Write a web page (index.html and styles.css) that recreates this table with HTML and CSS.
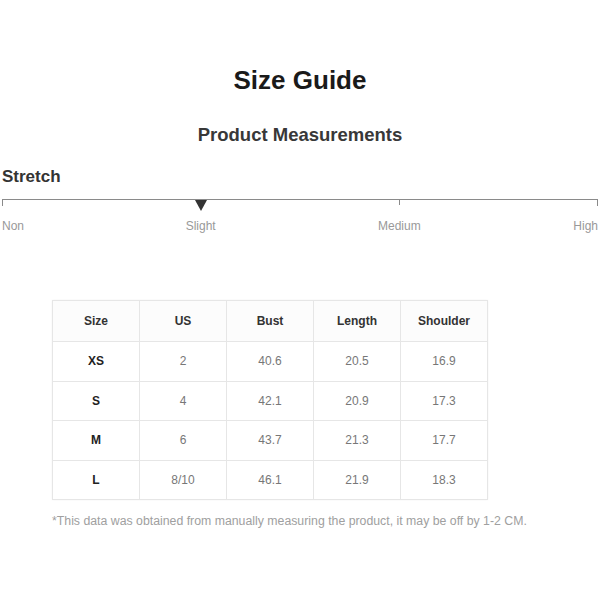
FILE: index.html
```html
<!DOCTYPE html>
<html>
<head>
<meta charset="utf-8">
<link rel="stylesheet" href="styles.css">
</head>
<body>
<div class="page">
  <h1 class="title">Size Guide</h1>
  <h2 class="subtitle">Product Measurements</h2>
  <section class="stretch">
    <div class="stretch-label">Stretch</div>
    <div class="scale">
      <div class="tick t0"></div>
      <div class="tick t1"></div>
      <div class="tick t2"></div>
      <div class="tick t3"></div>
      <div class="marker"></div>
    </div>
    <div class="scale-labels">
      <span class="lbl non">Non</span>
      <span class="lbl slight">Slight</span>
      <span class="lbl medium">Medium</span>
      <span class="lbl high">High</span>
    </div>
  </section>
  <div class="table-wrap">
    <table class="sizes">
      <thead>
        <tr><th>Size</th><th>US</th><th>Bust</th><th>Length</th><th>Shoulder</th></tr>
      </thead>
      <tbody>
        <tr><td class="sz">XS</td><td>2</td><td>40.6</td><td>20.5</td><td>16.9</td></tr>
        <tr><td class="sz">S</td><td>4</td><td>42.1</td><td>20.9</td><td>17.3</td></tr>
        <tr><td class="sz">M</td><td>6</td><td>43.7</td><td>21.3</td><td>17.7</td></tr>
        <tr><td class="sz">L</td><td>8/10</td><td>46.1</td><td>21.9</td><td>18.3</td></tr>
      </tbody>
    </table>
    <p class="note">*This data was obtained from manually measuring the product, it may be off by 1-2 CM.</p>
  </div>
</div>
</body>
</html>
```
FILE: styles.css
```css
html, body {
  margin: 0;
  padding: 0;
  background: #fff;
}
body {
  font-family: "Liberation Sans", Arial, sans-serif;
  color: #333;
}
.page {
  width: 600px;
  padding-top: 65px;
}
.title {
  margin: 0;
  font-size: 26px;
  line-height: 30px;
  font-weight: bold;
  color: #1a1a1a;
  text-align: center;
}
.subtitle {
  margin: 29px 0 0;
  font-size: 18.5px;
  line-height: 22px;
  font-weight: bold;
  color: #383838;
  text-align: center;
}
.stretch {
  margin-top: 21px;
  padding: 0 2px;
}
.stretch-label {
  font-size: 17px;
  line-height: 20px;
  font-weight: bold;
  color: #333;
}
.scale {
  position: relative;
  margin-top: 12px;
  height: 7px;
  border-top: 1px solid #8a8a8a;
}
.tick {
  position: absolute;
  top: 0;
  width: 1px;
  background: #8a8a8a;
}
.t0 { left: 0; height: 6px; }
.t1 { left: 33.33%; height: 5px; }
.t2 { left: 66.67%; height: 5px; }
.t3 { right: 0; height: 6px; }
.marker {
  position: absolute;
  top: 0;
  left: 33.33%;
  transform: translateX(-50%);
  width: 0;
  height: 0;
  border-left: 6px solid transparent;
  border-right: 6px solid transparent;
  border-top: 11px solid #333;
}
.scale-labels {
  display: grid;
  grid-template-columns: repeat(6, 1fr);
  margin-top: 12px;
  font-size: 12px;
  line-height: 14px;
  color: #999;
}
.lbl.non { grid-column: 1; text-align: left; }
.lbl.slight { grid-column: 2 / 4; text-align: center; }
.lbl.medium { grid-column: 4 / 6; text-align: center; }
.lbl.high { grid-column: 6; text-align: right; }
.table-wrap {
  margin-top: 67px;
  padding-left: 52px;
}
.sizes {
  border-collapse: collapse;
  border: 1px solid #e6e6e6;
  box-shadow: 0 0 2px rgba(0,0,0,0.05);
}
.sizes th, .sizes td {
  width: 86px;
  height: 38.5px;
  padding: 0;
  border: 1px solid #e6e6e6;
  text-align: center;
  font-size: 12px;
}
.sizes th {
  height: 40px;
  font-weight: bold;
  color: #333;
  background: #fcfcfc;
}
.sizes td {
  color: #777;
}
.sizes td.sz {
  font-weight: bold;
  color: #222;
}
.note {
  margin: 14px 0 0;
  font-size: 12.3px;
  line-height: 14px;
  color: #a0a0a0;
}
```
